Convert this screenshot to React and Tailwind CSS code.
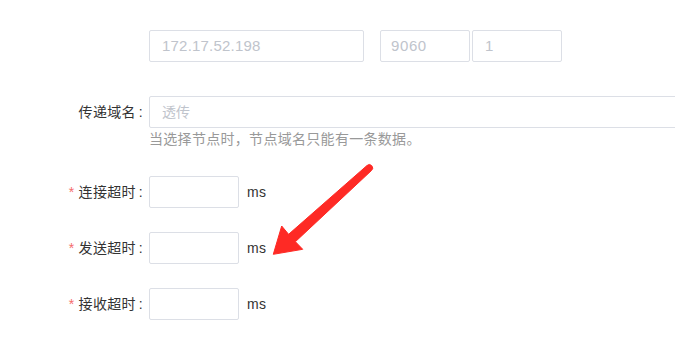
import React from "react";

const font = { fontFamily: '"Helvetica Neue", "Liberation Sans", "Noto Sans CJK SC", sans-serif' };

function Label({ required, children }) {
  return (
    <div className="w-[149px] shrink-0 pr-[6px] text-right text-[14px] leading-[32px] tracking-[0.3px] text-[#333]">
      {required && <span className="mr-[4px] text-[#f56c6c]">*</span>}
      {children}
      <span className="ml-[3px]">:</span>
    </div>
  );
}

function TimeoutRow({ label, className }) {
  return (
    <div className={"flex items-center " + className}>
      <Label required>{label}</Label>
      <div className="h-[32px] w-[90px] rounded-[2px] border border-[#dcdfe6] bg-white" />
      <span className="ml-[8px] text-[14px] tracking-[0.4px] text-[#333]">ms</span>
    </div>
  );
}

export default function App() {
  return (
    <div className="relative h-[343px] w-[675px] overflow-hidden bg-white" style={font}>
      <div className="flex pl-[149px] pt-[30px]">
        <div className="flex h-[32px] w-[215px] items-center rounded-[2px] border border-[#dcdfe6] px-[12px] text-[15px] tracking-[0.2px] text-[#c0c4cc]">
          172.17.52.198
        </div>
        <div className="ml-[16px] flex h-[32px] w-[90px] items-center rounded-[2px] border border-[#dcdfe6] px-[10px] text-[15px] tracking-[0.6px] text-[#c0c4cc]">
          9060
        </div>
        <div className="ml-[2px] flex h-[32px] w-[90px] items-center rounded-[2px] border border-[#dcdfe6] px-[12px] text-[15px] text-[#c0c4cc]">
          1
        </div>
      </div>

      <div className="mt-[34px] flex">
        <Label>传递域名</Label>
        <div className="flex h-[32px] w-[560px] shrink-0 items-center rounded-[2px] border border-[#dcdfe6] px-[12px] text-[14px] text-[#c0c4cc]">
          透传
        </div>
      </div>
      <div className="mt-[1px] pl-[149px] text-[14px] leading-[20px] tracking-[0.3px] text-[#999]">
        当选择节点时，节点域名只能有一条数据。
      </div>

      <TimeoutRow label="连接超时" className="mt-[27px]" />
      <TimeoutRow label="发送超时" className="mt-[24px]" />
      <TimeoutRow label="接收超时" className="mt-[24px]" />

      <svg className="pointer-events-none absolute left-0 top-0" width="675" height="343" viewBox="0 0 675 343">
        <path
          d="M 367 165.5 L 288.6 234.3 L 281.7 226 L 273.3 254.3 L 302.7 249.3 L 295.4 241.7 L 371.5 170.5 A 3.2 3.2 0 0 0 367 165.5 Z"
          fill="#fe2a25"
          stroke="#fe2a25"
          strokeWidth="1"
          strokeLinejoin="round"
        />
      </svg>
    </div>
  );
}
